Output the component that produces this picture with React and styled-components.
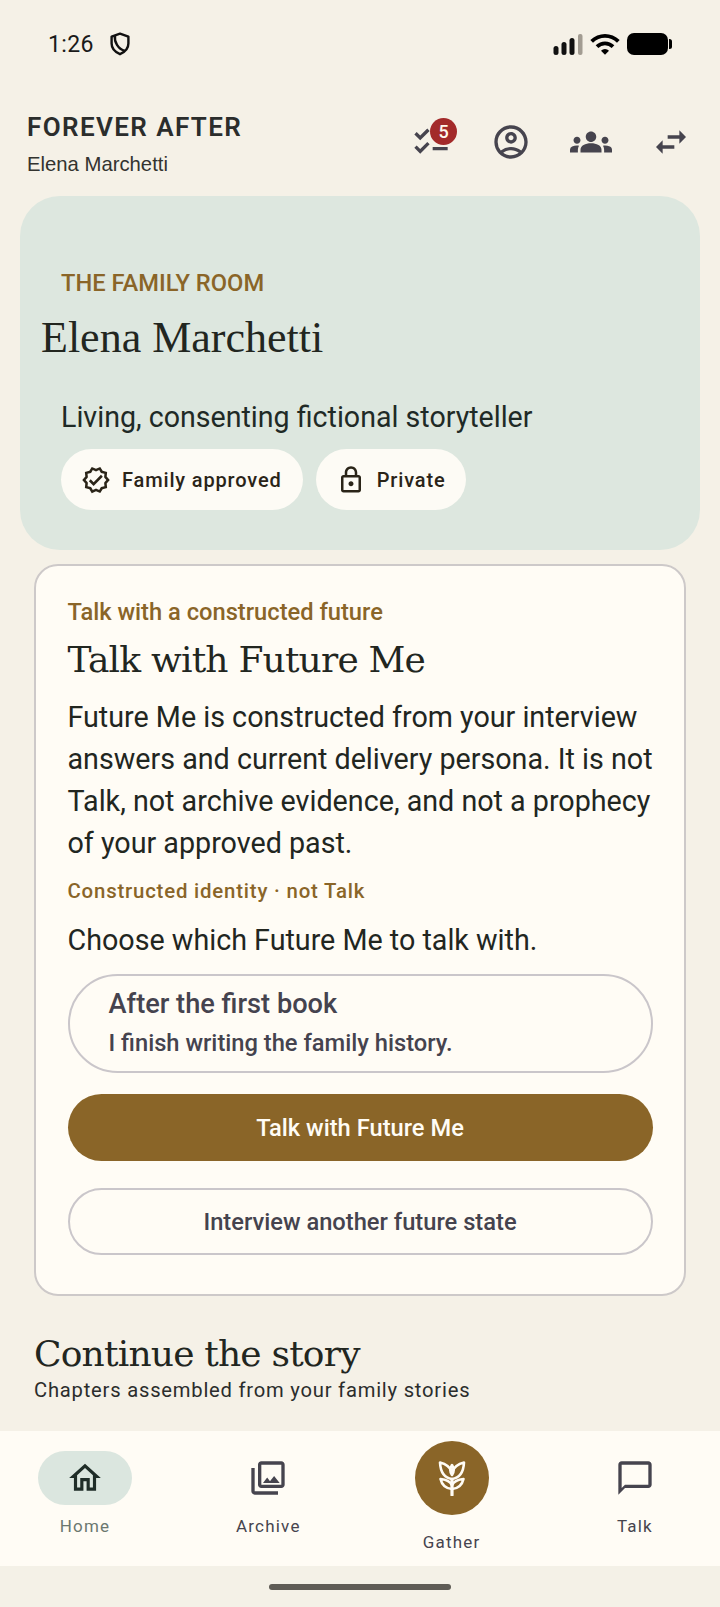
import React from "react";
import styled, { createGlobalStyle } from "styled-components";
import {
  MdChecklist, MdOutlineAccountCircle, MdGroups, MdSwapHoriz, MdOutlineVerified, MdOutlineLock,
  MdOutlineHome, MdOutlinePhotoLibrary, MdOutlineChatBubbleOutline, MdWifi,
} from "react-icons/md";

const Global = createGlobalStyle`
  html, body { margin: 0; padding: 0; background: #f5f1e7; }
  * { box-sizing: border-box; }
  body { font-family: Roboto, "Noto Sans", sans-serif; color: #22261f; }
`;

const Page = styled.div`
  width: 720px; height: 1607px; overflow: hidden; display: flex; flex-direction: column; background: #f5f1e7;
`;
const StatusBar = styled.div`
  height: 88px; padding: 0 48px 0 48px; display: flex; align-items: center; justify-content: space-between; flex: none;
`;
const StatusLeft = styled.div`display: flex; align-items: center; gap: 16px;`;
const Time = styled.span`font-size: 23px; letter-spacing: 0.4px; color: #1a1a1a;`;
const StatusRight = styled.div`display: flex; align-items: center; gap: 6px;`;

const Header = styled.header`
  height: 108px; padding: 22px 27px 0 27px; display: flex; justify-content: space-between; align-items: flex-start; flex: none;
`;
const BrandCol = styled.div`display: flex; flex-direction: column;`;
const Brand = styled.div`font-size: 26px; line-height: 34px; font-weight: 600; letter-spacing: 1.4px; color: #2b2d2c;`;
const UserName = styled.div`font-family: "Liberation Sans", sans-serif; font-size: 20.3px; line-height: 26px; margin-top: 7px; color: #33332f;`;
const HeaderIcons = styled.div`display: flex; align-items: center; gap: 36px; padding-top: 10px;`;
const IconSlot = styled.div`
  position: relative; width: 44px; height: 44px; display: flex; align-items: center; justify-content: center; color: #46444e;
`;
const Badge = styled.span`
  position: absolute; top: -2px; right: -4px; width: 27px; height: 27px; border-radius: 50%; background: #a32a2a; color: #fff8ee;
  font-size: 18px; font-weight: 500; display: flex; align-items: center; justify-content: center;
`;

const Hero = styled.section`
  flex: none; margin: 0 20px; height: 354px; border-radius: 40px; background: #dde7df; padding: 73px 0 0 21px;
`;
const Eyebrow = styled.div`font-size: 23.7px; line-height: 28px; font-weight: 500; color: #8a6528; margin-left: 20px;`;
const HeroName = styled.h1`
  margin: 13px 0 0; font-family: "Liberation Serif", serif; font-weight: 400; font-size: 44px; line-height: 56px; color: #22261f;
`;
const HeroText = styled.p`margin: 33px 0 0 20px; font-size: 28.6px; line-height: 36px; color: #1f2a26;`;
const Chips = styled.div`display: flex; gap: 13px; margin: 14px 0 0 20px;`;
const Chip = styled.div`
  height: 61px; padding: 0 21px 0 20px; border-radius: 31px; background: #fdfbf5; display: flex; align-items: center; gap: 11px;
  font-size: 20px; font-weight: 500; letter-spacing: 0.85px; color: #2a2418;
`;

const Card = styled.section`
  flex: none; margin: 14px 34px 0; height: 732px; border: 2px solid #cdc9c9; border-radius: 24px; background: #fffcf5; padding: 31px 31.5px 0;
`;
const CardEyebrow = styled.div`font-size: 23.7px; line-height: 30px; font-weight: 500; color: #8a6528;`;
const SerifTitle = styled.h2`
  margin: 0; font-family: "DejaVu Serif", serif; font-weight: 400; color: #22261f;
  font-size: ${p => p.$size}px; line-height: ${p => p.$line}px; letter-spacing: ${p => p.$track}px;
`;
const CardTitle = styled(SerifTitle)`margin-top: 9px;`;
const Body = styled.p`margin: 12px -8px 0 0; font-size: 28.7px; line-height: 42px; color: #22261f;`;
const Note = styled.div`margin-top: 13px; font-size: 20.4px; line-height: 28px; font-weight: 500; letter-spacing: 0.8px; color: #8a6528;`;
const Prompt = styled.p`margin: 17px 0 0; font-size: 28.7px; line-height: 36px; color: #22261f;`;
const Option = styled.div`
  margin-top: 16px; height: 99px; border: 2px solid #cac6ca; border-radius: 50px; padding: 11px 39px 0; color: #45434e;
`;
const OptionTitle = styled.div`font-size: 27.2px; line-height: 34px; font-weight: 500;`;
const OptionSub = styled.div`font-size: 23.7px; line-height: 30px; font-weight: 500; margin-top: 7px;`;
const PrimaryBtn = styled.div`
  margin-top: 21px; height: 67px; border-radius: 34px; background: #8a6528; color: #fffcf5; font-size: 23.7px; font-weight: 500;
  display: flex; align-items: center; justify-content: center;
`;
const SecondaryBtn = styled.div`
  margin-top: 27px; height: 67px; border-radius: 34px; border: 2px solid #cac6ca; color: #45434e; font-size: 23.7px; font-weight: 500;
  display: flex; align-items: center; justify-content: center;
`;

const Section = styled.section`flex: none; padding: 33px 34px 0; height: 135px;`;
const SectionSub = styled.div`font-size: 20.2px; line-height: 28px; letter-spacing: 0.78px; color: #2b2d2c; margin-top: -3px;`;

const Nav = styled.nav`
  flex: none; height: 135px; background: #fffcf5; display: grid; grid-template-columns: repeat(4, 183.3px); justify-content: center;
`;
const NavItem = styled.div`display: flex; flex-direction: column; align-items: center; padding-top: ${p => p.$fab ? 10 : 20}px;`;
const NavIcon = styled.div`
  width: 94px; height: 54px; border-radius: 27px; display: flex; align-items: center; justify-content: center;
  background: ${p => p.$active ? "#dbe6df" : "transparent"}; color: ${p => p.$active ? "#1f2d28" : "#46444e"};
`;
const Fab = styled.div`
  width: 74px; height: 74px; border-radius: 50%; background: #8a6528; color: #fffcf5; display: flex; align-items: center; justify-content: center;
`;
const NavLabel = styled.div`
  margin-top: ${p => p.$fab ? 15 : 9}px; font-size: 17px; line-height: 24px; font-weight: 450; letter-spacing: 1.2px;
  color: ${p => p.$active ? "#6b7770" : "#46444e"};
`;
const HomeArea = styled.div`flex: 1; display: flex; align-items: center; justify-content: center; background: #f4f1e7;`;
const HomeBar = styled.div`width: 182px; height: 6px; border-radius: 3px; background: #5f5c56;`;

const Shield = () => (
  <svg width="20" height="24" viewBox="0 0 20 24" fill="none" stroke="#111" strokeWidth="2.4" strokeLinejoin="round">
    <path d="M10 1.6 18.400 4.600v7c0 5-3.600 8.600-8.400 10.600C5.200 20.200 1.600 16.600 1.600 11.600v-7z" />
    <path d="M5 3.500 C4 10 8 17 15 19" />
  </svg>
);
const Signal = () => (
  <svg width="30" height="22" viewBox="0 0 30 22">
    <rect x="0.500" y="13" width="5" height="9" rx="2.500" fill="#111" />
    <rect x="8.500" y="9" width="5" height="13" rx="2.500" fill="#111" />
    <rect x="16.500" y="5" width="5" height="17" rx="2.500" fill="#111" />
    <rect x="25" y="1" width="4.500" height="21" rx="2" fill="#a29c92" />
  </svg>
);
const Battery = () => (
  <svg width="45" height="24" viewBox="0 0 45 24">
    <rect x="0" y="1" width="41" height="22" rx="7" fill="#000" />
    <path d="M42 7h.5a2.500 2.500 0 0 1 2.500 2.500v5a2.500 2.500 0 0 1-2.500 2.500h-.5z" fill="#000" />
  </svg>
);
const Wheat = () => (
  <svg width="28" height="36" viewBox="0 0 28 36" fill="none" stroke="#fffcf5" strokeWidth="2.600" strokeLinejoin="round" strokeLinecap="round">
    <path d="M14 20v15" strokeWidth="3.200" />
    <path d="M14 15c-2.200-3-2.200-6.500 0-10 2.200 3.500 2.200 7 0 10z" />
    <path d="M14 19C6 18 2.500 12 2 2.500 8 4 12 7 14 12" />
    <path d="M14 19c8-1 11.500-7 12-16.500C20 4 16 7 14 12" />
    <path d="M14 29c-6-.5-10-3.500-11.500-10C8 19.500 12 21.500 14 25" />
    <path d="M14 29c6-.5 10-3.500 11.500-10C20 19.500 16 21.500 14 25" />
  </svg>
);

export default function App() {
  return (
    <Page>
      <Global />
      <StatusBar>
        <StatusLeft><Time>1:26</Time><Shield /></StatusLeft>
        <StatusRight><Signal /><MdWifi size={32} color="#000" /><Battery /></StatusRight>
      </StatusBar>
      <Header>
        <BrandCol>
          <Brand>FOREVER AFTER</Brand>
          <UserName>Elena Marchetti</UserName>
        </BrandCol>
        <HeaderIcons>
          <IconSlot><MdChecklist size={40} /><Badge>5</Badge></IconSlot>
          <IconSlot><MdOutlineAccountCircle size={40} /></IconSlot>
          <IconSlot><MdGroups size={42} /></IconSlot>
          <IconSlot><MdSwapHoriz size={40} /></IconSlot>
        </HeaderIcons>
      </Header>
      <Hero>
        <Eyebrow>THE FAMILY ROOM</Eyebrow>
        <HeroName>Elena Marchetti</HeroName>
        <HeroText>Living, consenting fictional storyteller</HeroText>
        <Chips>
          <Chip><MdOutlineVerified size={30} />Family approved</Chip>
          <Chip><MdOutlineLock size={30} />Private</Chip>
        </Chips>
      </Hero>
      <Card>
        <CardEyebrow>Talk with a constructed future</CardEyebrow>
        <CardTitle $size={36} $line={48} $track={-0.8}>Talk with Future Me</CardTitle>
        <Body>Future Me is constructed from your interview answers and current delivery persona. It is not Talk, not archive evidence, and not a prophecy of your approved past.</Body>
        <Note>Constructed identity · not Talk</Note>
        <Prompt>Choose which Future Me to talk with.</Prompt>
        <Option>
          <OptionTitle>After the first book</OptionTitle>
          <OptionSub>I finish writing the family history.</OptionSub>
        </Option>
        <PrimaryBtn>Talk with Future Me</PrimaryBtn>
        <SecondaryBtn>Interview another future state</SecondaryBtn>
      </Card>
      <Section>
        <SerifTitle $size={36} $line={50} $track={-0.8}>Continue the story</SerifTitle>
        <SectionSub>Chapters assembled from your family stories</SectionSub>
      </Section>
      <Nav>
        <NavItem><NavIcon $active><MdOutlineHome size={38} /></NavIcon><NavLabel $active>Home</NavLabel></NavItem>
        <NavItem><NavIcon><MdOutlinePhotoLibrary size={40} /></NavIcon><NavLabel>Archive</NavLabel></NavItem>
        <NavItem $fab><Fab><Wheat /></Fab><NavLabel $fab>Gather</NavLabel></NavItem>
        <NavItem><NavIcon><MdOutlineChatBubbleOutline size={40} /></NavIcon><NavLabel>Talk</NavLabel></NavItem>
      </Nav>
      <HomeArea><HomeBar /></HomeArea>
    </Page>
  );
}
